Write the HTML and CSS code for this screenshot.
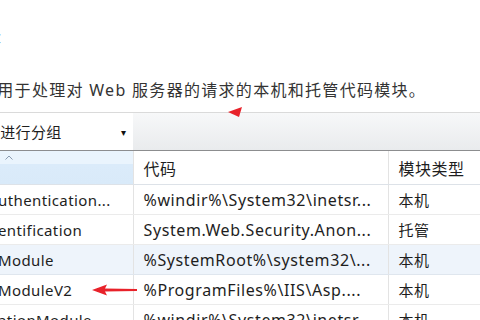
FILE: index.html
```html
<!DOCTYPE html>
<html lang="zh-CN">
<head>
    <meta charset="UTF-8">
    <title>模块</title>
    <link rel="stylesheet" href="styles.css">
</head>
<body>
    <div class="page">
        <!-- Page heading, cut at the left edge -->
        <h1 class="title">模块</h1>
        <p class="desc">置用于处理对 Web 服务器的请求的本机和托管代码模块。</p>

        <!-- Group-by toolbar -->
        <div class="toolbar">
            <div class="group">
                <span class="group-text">不进行分组</span>
                <span class="caret">&#9662;</span>
            </div>
            <div class="filler"></div>
        </div>

        <!-- Module list -->
        <table class="list">
            <colgroup>
                <col class="c-name">
                <col class="c-code">
                <col class="c-type">
            </colgroup>
            <thead>
                <tr>
                    <th class="sorted">
                        <svg class="sort" width="8" height="5" viewBox="0 0 8 5"><path d="M0.5 4.5 L4 1 L7.5 4.5" fill="none" stroke="#8a9bb0" stroke-width="1"/></svg>
                    </th>
                    <th>代码</th>
                    <th>模块类型</th>
                </tr>
            </thead>
            <tbody>
                <tr>
                    <td class="name"><span class="cut">uthentication...</span></td>
                    <td class="code">%windir%\System32\inetsr...</td>
                    <td>本机</td>
                </tr>
                <tr>
                    <td class="name"><span class="cut">entification</span></td>
                    <td class="code">System.Web.Security.Anon...</td>
                    <td>托管</td>
                </tr>
                <tr class="hover">
                    <td class="name"><span class="cut">Module</span></td>
                    <td class="code">%SystemRoot%\system32\...</td>
                    <td>本机</td>
                </tr>
                <tr>
                    <td class="name"><span class="cut">ModuleV2</span></td>
                    <td class="code">%ProgramFiles%\IIS\Asp....</td>
                    <td>本机</td>
                </tr>
                <tr>
                    <td class="name"><span class="cut">ationModule</span></td>
                    <td class="code">%windir%\System32\inetsr...</td>
                    <td>本机</td>
                </tr>
            </tbody>
        </table>

        <!-- Red annotation arrows -->
        <svg class="mark mark-top" width="16" height="12" viewBox="0 0 16 12">
            <polygon points="1,6 15,1 12,11" fill="#e8222a"/>
        </svg>
        <svg class="mark mark-row" width="50" height="14" viewBox="0 0 50 14">
            <polygon points="1,7 16,1.5 14,5.5 46,6 46,8 14,8.5 16,12.5" fill="#e8222a"/>
        </svg>
    </div>
</body>
</html>
```

FILE: styles.css
```css
/* Page base */
body {
    margin: 0;
    background-color: #fff;
    font-family: "Noto Sans", "Noto Sans CJK SC", sans-serif;
    color: #1e1e1e;
    overflow: hidden;
}
.page {
    position: relative;
    width: 480px;
    height: 320px;
    overflow: hidden;
}
/* Heading and description */
.title {
    margin: 0;
    padding-top: 22px;
    height: 34px;
    font-size: 20px;
    font-weight: normal;
    line-height: 26px;
    text-indent: -39px;
    color: #1e1e1e;
}
.desc {
    margin: 0;
    padding-top: 23px;
    height: 33px;
    font-size: 16px;
    line-height: 22px;
    text-indent: -20px;
    letter-spacing: 1.3px;
    color: #333;
}
/* Toolbar */
.toolbar {
    display: flex;
    height: 37px;
    border-top: 1px solid #dadada;
    border-bottom: 1px solid #8c8d8f;
}
.group {
    width: 133px;
    display: flex;
    align-items: center;
    justify-content: space-between;
    background-color: #fff;
    font-size: 15px;
    padding-right: 7px;
    box-sizing: border-box;
}
.group-text {
    margin-left: -15px;
    letter-spacing: 0.3px;
}
.caret {
    font-size: 10px;
    color: #111;
}
.filler {
    flex: 1;
    background: linear-gradient(#f7f8f9, #e9ebed);
}
/* Table */
.list {
    width: 520px;
    border-collapse: collapse;
    table-layout: fixed;
    font-size: 15px;
}
.c-name { width: 133px; }
.c-code { width: 255px; }
.c-type { width: 132px; }
th, td {
    padding: 0 0 0 10px;
    text-align: left;
    white-space: nowrap;
    overflow: hidden;
    border-right: 1px solid #e3e3e3;
}
th {
    height: 32px;
    font-weight: normal;
    font-size: 16px;
    letter-spacing: 0.5px;
    padding-top: 1px;
    border-bottom: 1px solid #dde2e8;
    vertical-align: middle;
}
th.sorted {
    background: linear-gradient(#eaf4fd 0, #eaf4fd 40%, #dbebfa 40%, #d9eaf9 100%);
    vertical-align: top;
    padding-left: 5px;
}
.sort {
    display: block;
    margin-top: 3px;
}
td {
    height: 29px;
    border-bottom: 1px solid #ebebeb;
    letter-spacing: 0.4px;
}
td.code {
    font-size: 16px;
    letter-spacing: 0.6px;
}
td.name {
    padding-left: 0;
}
.cut {
    display: inline-block;
    margin-left: -2px;
}
tr.hover td {
    background-color: #eef4fb;
    border-bottom-color: #dfe6ee;
}
/* Annotation arrows over the content */
.mark {
    position: absolute;
    filter: blur(0.4px);
}
.mark-top {
    left: 227px;
    top: 106px;
}
.mark-row {
    left: 91px;
    top: 283px;
}
```
